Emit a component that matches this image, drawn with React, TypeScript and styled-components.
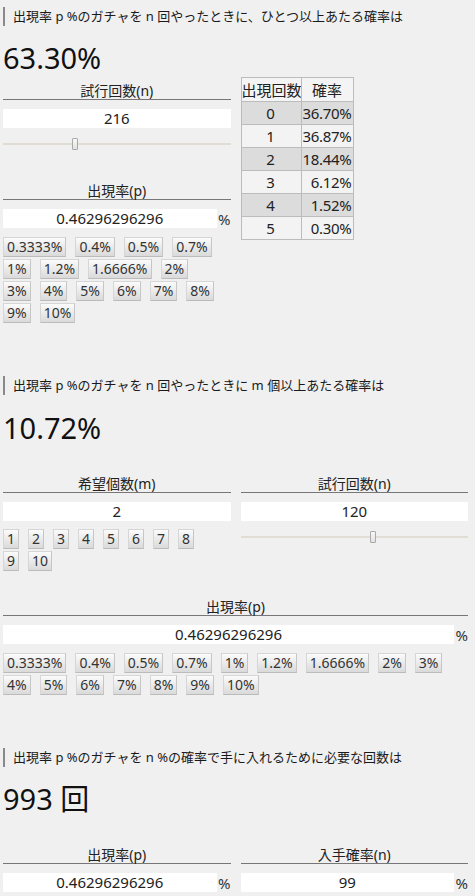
import React from "react";
import styled, { createGlobalStyle } from "styled-components";

const GlobalStyle = createGlobalStyle`
  html, body {
    margin: 0;
    background: #f0f0f0;
  }
  body {
    font-family: "Noto Sans", "Noto Sans CJK JP", sans-serif;
    color: #222;
  }
  *, *::before, *::after {
    box-sizing: border-box;
  }
`;

const Page = styled.div`
  padding: 7px 7px 0 3px;
`;

const Section = styled.section`
  margin-bottom: 53px;
  &:last-child {
    margin-bottom: 0;
  }
`;

const SectionHeader = styled.h2`
  margin: 0;
  height: 19px;
  line-height: 19px;
  padding-left: 8px;
  border-left: 2px solid #8a8a8a;
  font-size: 13px;
  font-weight: normal;
  color: #1a1a1a;
  white-space: nowrap;
`;

const Result = styled.div<{ $top: number }>`
  margin-top: ${(p) => p.$top}px;
  height: 36px;
  line-height: 36px;
  font-size: 29px;
  color: #111;
`;

const Columns = styled.div<{ $top: number }>`
  display: grid;
  grid-template-columns: 1fr 1fr;
  column-gap: 10px;
  align-items: start;
  margin-top: ${(p) => p.$top}px;
`;

const Field = styled.div<{ $top?: number }>`
  padding-top: ${(p) => p.$top ?? 0}px;
`;

const FieldLabel = styled.div<{ $top?: number }>`
  margin-top: ${(p) => p.$top ?? 0}px;
  height: 18px;
  line-height: 17px;
  text-align: center;
  font-size: 14px;
  color: #222;
  border-bottom: 1px solid #777;
`;

const ValueRow = styled.div`
  display: flex;
  align-items: center;
  margin-top: 9px;
  height: 19px;
`;

const ValueBox = styled.div`
  flex: 1;
  height: 19px;
  line-height: 19px;
  background: #fff;
  text-align: center;
  font-size: 15px;
  color: #222;
`;

const Unit = styled.span`
  width: 14px;
  text-align: right;
  font-size: 15px;
  color: #333;
`;

const SliderTrack = styled.div`
  position: relative;
  margin-top: 10px;
  height: 12px;
  &::before {
    content: "";
    position: absolute;
    left: 0;
    right: 0;
    top: 5px;
    height: 2px;
    background: #e2ddd4;
  }
`;

const SliderThumb = styled.div`
  position: absolute;
  top: 0;
  width: 6px;
  height: 12px;
  margin-left: -3px;
  background: linear-gradient(#f8f8f8, #e2e2e2);
  border: 1px solid #a9a9a9;
  border-radius: 1px;
`;

const ChipWrap = styled.div<{ $top?: number }>`
  display: flex;
  flex-wrap: wrap;
  gap: 2px 9px;
  margin: ${(p) => p.$top ?? 8}px 14px 0 0;
`;

const Chip = styled.button`
  margin: 0;
  height: 20px;
  padding: 0 3px;
  font-family: inherit;
  font-size: 14px;
  line-height: 18px;
  color: #333;
  background: linear-gradient(#fbfbfb, #dadada);
  border: 1px solid #d6d6d6;
  border-bottom-color: #bbbbbb;
  border-right-color: #c6c6c6;
  border-radius: 0;
  cursor: pointer;
`;

const Table = styled.table`
  border-collapse: collapse;
  table-layout: fixed;
  width: 112px;
  font-size: 15px;
  border: 1px solid #a8a8a8;
`;

const HeadCell = styled.th<{ $w: number }>`
  width: ${(p) => p.$w}px;
  height: 24px;
  padding: 0;
  font-weight: normal;
  background: #f4f4f4;
  border: 1px solid #bcbcbc;
  white-space: nowrap;
  overflow: hidden;
`;

const Row = styled.tr<{ $shade: boolean }>`
  background: ${(p) => (p.$shade ? "#dcdcdc" : "#f3f3f3")};
`;

const Cell = styled.td<{ $align: "center" | "right" }>`
  height: 23px;
  padding: 0 1px 0 0;
  text-align: ${(p) => p.$align};
  border: 1px solid #bcbcbc;
  white-space: nowrap;
  letter-spacing: -0.3px;
  overflow: hidden;
`;

const rates = [
  "0.3333%", "0.4%", "0.5%", "0.7%", "1%", "1.2%", "1.6666%",
  "2%", "3%", "4%", "5%", "6%", "7%", "8%", "9%", "10%",
];
const counts = ["1", "2", "3", "4", "5", "6", "7", "8", "9", "10"];
const distribution = ["36.70%", "36.87%", "18.44%", "6.12%", "1.52%", "0.30%"];

const Slider: React.FC<{ value: number; max: number }> = ({ value, max }) => (
  <SliderTrack>
    <SliderThumb style={{ left: `${(value / max) * 100}%` }} />
  </SliderTrack>
);

const Chips: React.FC<{ items: string[]; top?: number }> = ({ items, top }) => (
  <ChipWrap $top={top}>
    {items.map((t) => (
      <Chip key={t}>{t}</Chip>
    ))}
  </ChipWrap>
);

const Value: React.FC<{ value: string; unit?: string }> = ({ value, unit }) => (
  <ValueRow>
    <ValueBox>{value}</ValueBox>
    {unit && <Unit>{unit}</Unit>}
  </ValueRow>
);

const App: React.FC = () => {
  return (
    <>
      <GlobalStyle />
      <Page>
        <Section>
          <SectionHeader>
            出現率 p %のガチャを n 回やったときに、ひとつ以上あたる確率は
          </SectionHeader>
          <Result $top={14}>63.30%</Result>
          <Columns $top={1}>
            <Field $top={5}>
              <FieldLabel>試行回数(n)</FieldLabel>
              <Value value="216" />
              <Slider value={216} max={680} />
              <FieldLabel $top={32}>出現率(p)</FieldLabel>
              <Value value="0.46296296296" unit="%" />
              <Chips items={rates} top={9} />
            </Field>
            <Table>
              <thead>
                <tr>
                  <HeadCell $w={60}>出現回数</HeadCell>
                  <HeadCell $w={52}>確率</HeadCell>
                </tr>
              </thead>
              <tbody>
                {distribution.map((p, i) => (
                  <Row key={i} $shade={i % 2 === 0}>
                    <Cell $align="center">{i}</Cell>
                    <Cell $align="right">{p}</Cell>
                  </Row>
                ))}
              </tbody>
            </Table>
          </Columns>
        </Section>

        <Section>
          <SectionHeader>
            出現率 p %のガチャを n 回やったときに m 個以上あたる確率は
          </SectionHeader>
          <Result $top={15}>10.72%</Result>
          <Columns $top={29}>
            <Field>
              <FieldLabel>希望個数(m)</FieldLabel>
              <Value value="2" />
              <Chips items={counts} />
            </Field>
            <Field>
              <FieldLabel>試行回数(n)</FieldLabel>
              <Value value="120" />
              <Slider value={120} max={206} />
            </Field>
          </Columns>
          <FieldLabel $top={27}>出現率(p)</FieldLabel>
          <Value value="0.46296296296" unit="%" />
          <Chips items={rates} top={9} />
        </Section>

        <Section>
          <SectionHeader>
            出現率 p %のガチャを n %の確率で手に入れるために必要な回数は
          </SectionHeader>
          <Result $top={14}>993 回</Result>
          <Columns $top={29}>
            <Field>
              <FieldLabel>出現率(p)</FieldLabel>
              <Value value="0.46296296296" unit="%" />
            </Field>
            <Field>
              <FieldLabel>入手確率(n)</FieldLabel>
              <Value value="99" unit="%" />
            </Field>
          </Columns>
        </Section>
      </Page>
    </>
  );
};

export default App;
